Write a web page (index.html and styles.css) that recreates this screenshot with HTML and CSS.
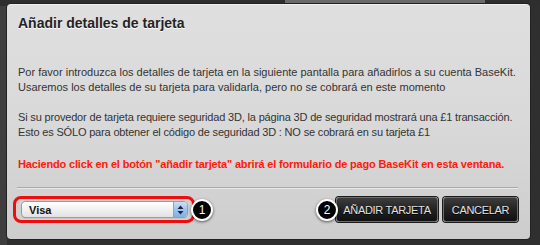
FILE: index.html
```html
<!DOCTYPE html>
<html>
<head>
<meta charset="utf-8">
<link rel="stylesheet" href="styles.css">
</head>
<body>
<div class="backdrop">
  <div class="topstrip"><span class="tab"></span></div>
  <div class="dialog">
    <h1 class="title">Añadir detalles de tarjeta</h1>
    <div class="content">
      <p><span class="line">Por favor introduzca los detalles de tarjeta en la siguiente pantalla para añadirlos a su cuenta BaseKit.</span><span class="line">Usaremos los detalles de su tarjeta para validarla, pero no se cobrará en este momento</span></p>
      <p><span class="line tight">Si su provedor de tarjeta requiere seguridad 3D, la página 3D de seguridad mostrará una £1 transacción.</span><span class="line tight">Esto es SÓLO para obtener el código de seguridad 3D : NO se cobrará en su tarjeta £1</span></p>
      <p class="warn"><span class="line tight">Haciendo click en el botón "añadir tarjeta" abrirá el formulario de pago BaseKit en esta ventana.</span></p>
    </div>
    <div class="footer">
      <div class="left">
        <div class="highlight">
          <div class="select">
            <span class="value">Visa</span>
            <span class="arrows">
              <svg width="7" height="10" viewBox="0 0 7 10"><path d="M3.5 0.5 L6.5 4 H0.5 Z M3.5 9.5 L6.5 6 H0.5 Z" fill="#1a2740"/></svg>
            </span>
          </div>
        </div>
        <span class="badge">1</span>
      </div>
      <div class="right">
        <span class="badge">2</span>
        <button class="btn btn-add">AÑADIR TARJETA</button>
        <button class="btn btn-cancel">CANCELAR</button>
      </div>
    </div>
  </div>
</div>
</body>
</html>
```

FILE: styles.css
```css
* { box-sizing: border-box; }
html, body { margin: 0; padding: 0; }
body {
  background: #333333;
  font-family: "Liberation Sans", Arial, sans-serif;
  width: 540px;
  height: 245px;
  overflow: hidden;
}
.backdrop {
  position: relative;
  height: 245px;
  background: linear-gradient(90deg, #3e3e3e 0, #3e3e3e 7px, #2f2f2f 7px);
}
.topstrip {
  position: absolute;
  left: 0; top: 0; right: 0;
  height: 6px;
  background: #2e2e2e;
}
.topstrip .tab {
  position: absolute;
  left: 285px; top: 0;
  width: 200px; height: 6px;
  background: #6a6a6a;
}
.dialog {
  position: absolute;
  left: 7px; top: 4px;
  width: 523px; height: 235px;
  border-radius: 4px;
  background: linear-gradient(180deg, #dfdfdf 0%, #d9d9d9 50%, #cdcdcd 100%);
  border-top: 1px solid #f0f0f0;
  box-shadow: 0 0 0 1px #222;
  padding: 0 12px 0 10px;
}
.title {
  margin: 0;
  padding-top: 9px;
  padding-left: 1px;
  font-size: 14px;
  font-weight: bold;
  color: #232323;
  text-shadow: 0 1px 0 #fff;
  line-height: 18px;
}
.content {
  padding-top: 33px;
  padding-left: 1px;
  font-size: 11px;
  color: #333;
  line-height: 15px;
}
.content p { margin: 0 0 15px 0; }
.line { display: block; white-space: nowrap; }
.line.tight { letter-spacing: -0.17px; }
.content .warn {
  color: #ff1a0a;
  font-weight: bold;
  margin-top: 17px;
}
.footer {
  margin-top: 11px;
  border-top: 1px solid #a9a9a9;
  box-shadow: inset 0 1px 0 #e8e8e8;
  display: flex;
  justify-content: space-between;
  align-items: center;
  padding-top: 8px;
}
.left, .right { display: flex; align-items: center; }
.left { margin-left: -4px; }
.highlight {
  border: 3px solid #f00c0c;
  border-radius: 8px;
  padding: 3px 5px 3px 6px;
  width: 182px;
  height: 27px;
}
.select {
  height: 15px;
  border-radius: 4px;
  background: linear-gradient(180deg, #ffffff 0%, #f1f1f1 50%, #e2e2e2 100%);
  box-shadow: 0 0 0 1px #9b9b9b, 0 1px 1px rgba(0,0,0,0.3);
  display: flex;
  align-items: center;
  justify-content: space-between;
  font-size: 11px;
  font-weight: bold;
  color: #111;
  overflow: hidden;
}
.select .value { padding-left: 7px; }
.arrows {
  width: 14px; height: 15px;
  background: linear-gradient(180deg, #cde0f5 0%, #9ec3ec 50%, #7fb0e6 100%);
  border-left: 1px solid #8aa6c6;
  display: flex; align-items: center; justify-content: center;
}
.arrows svg { display: block; }
.badge {
  width: 22px; height: 22px;
  border-radius: 50%;
  background: #000;
  border: 2px solid #fff;
  box-shadow: 0 1px 3px rgba(0,0,0,0.6);
  color: #fff;
  font-size: 12px;
  line-height: 18px;
  text-align: center;
  font-family: "Liberation Sans", Arial, sans-serif;
}
.left .badge { margin-left: -4px; }
.right .badge { margin-right: -2px; position: relative; z-index: 1; }
.btn {
  height: 25px;
  border: 1px solid #6d6d6d;
  border-radius: 3px;
  background: linear-gradient(180deg, #3d3d3d 0%, #222 50%, #111 100%);
  color: #e2e2e2;
  font-family: "Liberation Sans", Arial, sans-serif;
  font-size: 11px;
  letter-spacing: -0.3px;
  white-space: nowrap;
  text-shadow: 0 1px 0 #000;
  padding: 0;
  margin-left: 5px;
  box-shadow: 0 0 0 1px #1a1a1a;
}
.btn-add { width: 102px; margin-left: 0; }
.btn-cancel { width: 75px; }
```
